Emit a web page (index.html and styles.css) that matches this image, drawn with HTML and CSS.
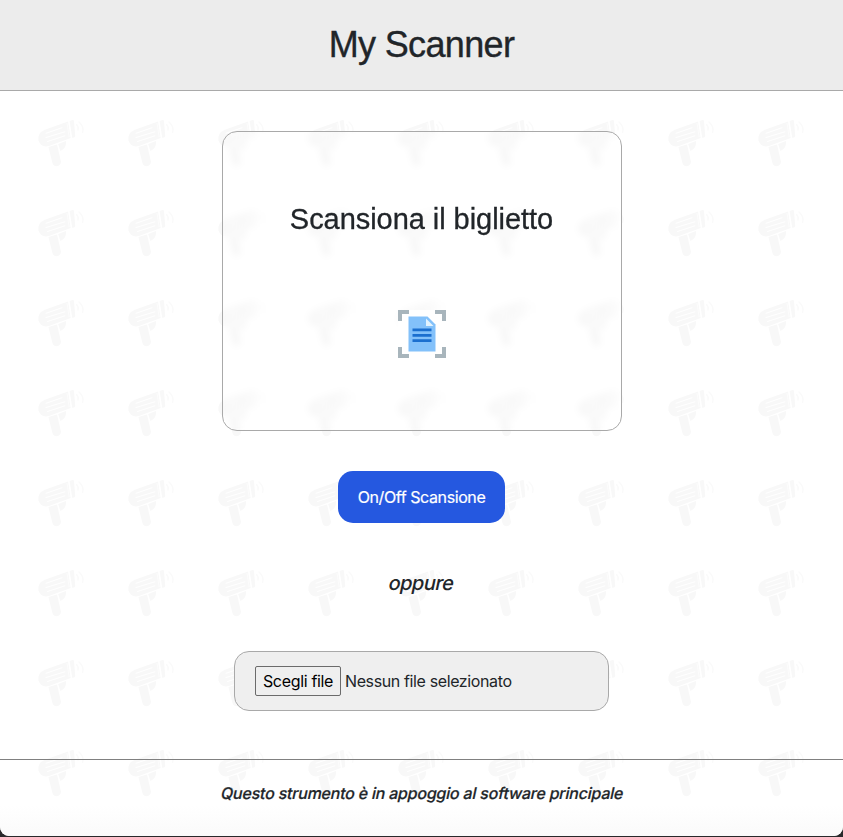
FILE: index.html
```html
<!DOCTYPE html>
<html lang="it">
<head>
<meta charset="utf-8">
<title>My Scanner</title>
<link rel="stylesheet" href="styles.css">
</head>
<body>
<div class="window">
  <svg class="wallpaper" aria-hidden="true">
    <defs>
      <pattern id="guns" width="90" height="90" patternUnits="userSpaceOnUse">
        <g fill="#f8f8f8">
          <path d="M45.5 39.5 68 31.4 70.6 48 49 56Q41 58 38.5 50.500Q37 43 45.500 39.500Z"/>
          <path d="M69.600 31 72.500 30Q73.700 29.800 74 31L75.200 46Q75 47.400 73.800 47.500L72.300 48Z"/>
          <path d="M48.500 57 57 54.500 61 72Q60.500 75.500 57 76.200Q53.500 76.200 52.500 73Z"/>
          <path d="M58.200 54 66 51Q67 58 60.400 61Z"/>
        </g>
        <path d="M46 43.300 62 37.700M46 47.500 65 41.800M47.500 51.500 65 45.800" fill="none" stroke="#fff" stroke-width="1.100" stroke-linecap="round"/>
        <path d="M67 33 69.200 47" stroke="#fff" stroke-width=".6"/>
        <path d="M76.500 34.500Q79 37 78 40M79 32Q84.500 37 82.500 42.500" fill="none" stroke="#fafafa" stroke-width="1.400" stroke-linecap="round"/>
      </pattern>
    </defs>
    <rect width="100%" height="100%" fill="url(#guns)"/>
  </svg>
  <header class="header"><h1 class="title">My Scanner</h1></header>
  <main class="main">
    <section class="scanner">
      <h2 class="scanner-title">Scansiona il biglietto</h2>
      <svg class="scan-icon" viewBox="0 0 48 48" aria-hidden="true">
        <path fill="#fff" d="M0 0H48V48H0Z"/>
        <path fill="#a8b5bc" d="M0 0H11V4H4V11H0ZM37 0H48V11H44V4H37ZM0 37H4V44H11V48H0ZM44 37H48V48H37V44H44Z"/>
        <path fill="#83c1fa" d="M10.500 6.500H29.500L37.500 14.500V41.500H10.500Z"/>
        <path fill="#e3f3fe" d="M28 8.500V16H35.500Z"/>
        <path fill="#1b6fcf" d="M14.500 18.500H33.500V21.200H14.500ZM14.500 24H33.500V26.700H14.500ZM14.500 29.300H33.500V32H14.500Z"/>
      </svg>
    </section>
    <button class="toggle" type="button"><span class="toggle-label">On/Off Scansione</span></button>
    <p class="or">oppure</p>
    <div class="file-box">
      <button class="file-button" type="button"><span class="file-label">Scegli file</span></button>
      <span class="file-name">Nessun file selezionato</span>
    </div>
  </main>
  <footer class="footer"><span class="note">Questo strumento è in appoggio al software principale</span></footer>
</div>
</body>
</html>
```
FILE: styles.css
```css
* { box-sizing: border-box; }
html { background: #29292b; }
body {
  margin: 0;
  height: 837px;
  overflow: hidden;
  background: #29292b;
  color: #212529;
  font: 16px/24px Inter, sans-serif;
}
.window {
  position: relative;
  display: flex;
  flex-direction: column;
  height: 836px;
  overflow: hidden;
  background: #fff;
  border-radius: 0 0 9px 9px;
}
.wallpaper {
  position: absolute;
  inset: 0;
  width: 100%;
  height: 100%;
}
.header {
  position: relative;
  display: flex;
  justify-content: center;
  height: 91px;
  padding-top: 23px;
  background: #ececec;
  border-bottom: 1px solid #a9a9a9;
}
.title {
  margin: 0;
  font: 400 36px/43px "Liberation Sans", sans-serif;
  letter-spacing: -.65px;
  -webkit-text-stroke: .35px currentColor;
}
.main {
  position: relative;
  display: flex;
  flex-direction: column;
  align-items: center;
  height: 668px;
  padding-top: 40px;
}
.scanner {
  display: flex;
  flex-direction: column;
  align-items: center;
  width: 400px;
  height: 300px;
  padding-top: 70px;
  border: 1px solid #a9a9a9;
  border-radius: 15px;
  backdrop-filter: blur(3px);
}
.scanner-title {
  margin: 0 0 73px;
  font: 400 29px/35px "Liberation Sans", sans-serif;
  letter-spacing: -.05px;
  white-space: nowrap;
  -webkit-text-stroke: .3px currentColor;
}
.scan-icon { width: 48px; height: 48px; }
.toggle {
  width: 167px;
  height: 52px;
  margin-top: 40px;
  padding: 0;
  border: 0;
  border-radius: 15px;
  background: #2558e0;
  color: #fff;
  font: 16px/24px Inter, sans-serif;
  letter-spacing: -.4px;
  -webkit-text-stroke: .2px currentColor;
}
.or {
  margin: 45px 0 0;
  font-size: 20px;
  line-height: 30px;
  font-weight: 500;
  letter-spacing: -.55px;
  transform: skewX(-12deg);
}
.file-box {
  display: flex;
  align-items: center;
  gap: 4px;
  width: 375px;
  height: 60px;
  margin-top: 53px;
  padding-left: 20px;
  border: 1px solid #a9a9a9;
  border-radius: 15px;
  background: #efefef;
}
.file-button {
  width: 86px;
  height: 30px;
  padding: 0;
  border: 1px solid #6b6b6b;
  border-radius: 2px;
  background: #efefef;
  color: #000;
  font: 16px/24px Inter, sans-serif;
  letter-spacing: -.33px;
  white-space: nowrap;
}
.file-name { letter-spacing: -.38px; }
.footer {
  position: relative;
  display: flex;
  justify-content: center;
  height: 77px;
  padding-top: 21px;
  border-top: 1px solid #808080;
  background: linear-gradient(transparent 60%, #fafafa);
  font-weight: 500;
  letter-spacing: -.22px;
}
.note {
  margin-right: 5px;
  white-space: nowrap;
  transform: skewX(-12deg);
  -webkit-text-stroke: .2px currentColor;
}
```
